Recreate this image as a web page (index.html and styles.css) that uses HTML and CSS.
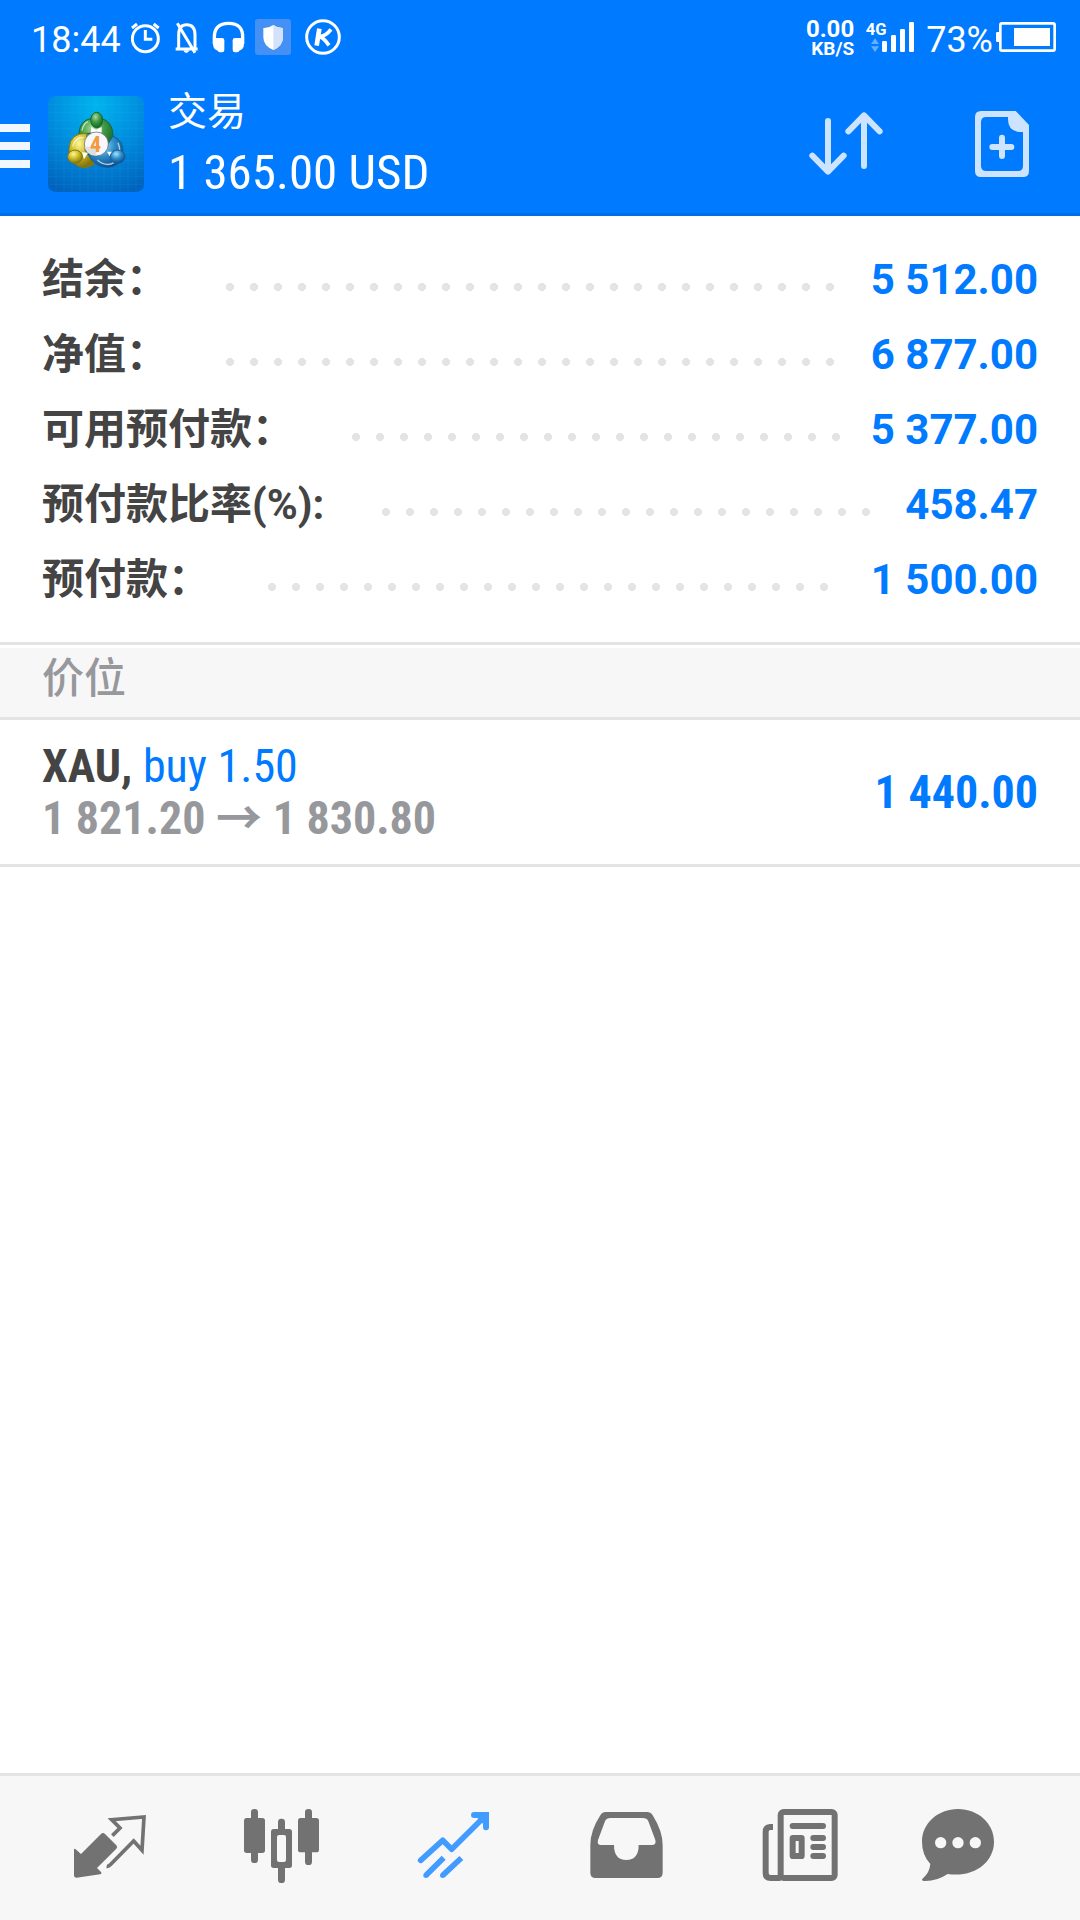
FILE: index.html
```html
<!DOCTYPE html>
<html lang="zh-CN">
<head>
<meta charset="utf-8">
<meta name="viewport" content="width=device-width, initial-scale=1">
<title>交易</title>
<link rel="stylesheet" href="styles.css">
</head>
<body>
<div class="status">
  <div class="status-group">
    <span class="status-text">18:44</span>
    <svg width="34" height="36" viewBox="393 57 102 108" fill="none" stroke="#fff" stroke-width="9"><circle cx="436" cy="116" r="39"/><path d="M436 90v28h21M396 84l15-12M476 84l-15-12"/></svg>
    <svg width="26" height="36" viewBox="525 57 78 108" fill="none" stroke="#fff" stroke-width="9"><path d="M527 147h66M536 146v-42q0-30 24-30q25 0 25 30v42M532 70l53 88"/><path d="M550 151h18q-2 8-9 8t-9-8z" fill="#fff" stroke="none"/></svg>
    <svg width="34" height="36" viewBox="633 57 102 108"><path d="M643 132v-20q0-42 43-42t42 42v20" fill="none" stroke="#fff" stroke-width="10"/><rect x="653" y="114" width="20" height="43" rx="7" fill="#fff"/><rect x="698" y="114" width="20" height="43" rx="7" fill="#fff"/><path d="M639 114h22v40q-22-2-22-22zM732 114h-22v40q22-2 22-22z" fill="#fff"/></svg>
    <svg width="36" height="36" viewBox="762 57 108 108"><rect x="762" y="57" width="108" height="108" rx="9" fill="#4590f4"/><path d="M817 75q14 10 29 9v28q0 26-29 38q-30-12-30-38v-28q15 1 30-9z" fill="#fff"/><path d="M817 75q14 10 29 9v28q0 26-29 38z" fill="#d2e2fa"/></svg>
    <svg width="40" height="36" viewBox="903 57 120 108" fill="none" stroke="#fff"><circle cx="969" cy="111" r="49" stroke-width="9"/><path d="M958 86l-8 51" stroke-width="14"/><path d="M993 88q-15 20-35 22q12 2 29 26" stroke-width="11"/></svg>
  </div>
  <div class="status-group">
    <span class="speed"><span class="speed-value">0.00</span><span class="speed-unit">KB/S</span></span>
    <svg width="52" height="36" viewBox="255 57 156 108" fill="#fff"><text class="network" x="260" y="105">4G</text><path d="M288 115l12 17h-24zM288 156l12-17h-24z" fill="#66afff"/><rect x="309" y="123" width="15" height="33" rx="4"/><rect x="336" y="105" width="15" height="51" rx="4"/><rect x="363" y="87" width="15" height="69" rx="4"/><rect x="390" y="66" width="15" height="90" rx="4"/></svg>
    <span class="battery"><span class="status-text">73%</span>
    <svg width="60" height="36" viewBox="648 57 180 108"><rect x="661" y="70" width="163" height="82" rx="5" fill="none" stroke="#fff" stroke-width="8"/><path d="M648 100q0-4 4-4h6v30h-6q-4 0-4-4zM702 84h108v54H702z" fill="#fff"/></svg></span>
  </div>
</div>

<header class="header">
  <button class="menu" type="button" aria-label="菜单"><svg width="30" height="44" viewBox="0 0 30 44" fill="#f0f7ff"><path d="M0 0h30v8H0zM0 18h30v8H0zM0 36h30v8H0z"/></svg></button>
  <svg class="logo" width="96" height="96" viewBox="24 33 288 288">
    <defs>
      <radialGradient id="sky" cx=".5" cy=".1" r=".95"><stop offset="0" stop-color="#00b4ee"/><stop offset=".55" stop-color="#0089dc"/><stop offset="1" stop-color="#0064bd"/></radialGradient>
      <radialGradient id="green" cx=".4" cy=".3" r=".7"><stop offset="0" stop-color="#a5dc9c"/><stop offset=".5" stop-color="#3f9a43"/><stop offset="1" stop-color="#17682c"/></radialGradient>
      <radialGradient id="yellow" cx=".4" cy=".3" r=".7"><stop offset="0" stop-color="#fff79a"/><stop offset=".5" stop-color="#cdbb28"/><stop offset="1" stop-color="#857409"/></radialGradient>
      <radialGradient id="blue" cx=".4" cy=".3" r=".7"><stop offset="0" stop-color="#a8e2fb"/><stop offset=".5" stop-color="#2e8fcb"/><stop offset="1" stop-color="#0a4f8d"/></radialGradient>
    </defs>
    <rect x="24" y="33" width="288" height="288" rx="22" fill="url(#sky)"/>
    <path d="M48 33v288M72 33v288M96 33v288M120 33v288M144 33v288M168 33v288M192 33v288M216 33v288M240 33v288M264 33v288M288 33v288M24 58h288M24 82h288M24 106h288M24 130h288M24 154h288M24 178h288M24 202h288M24 226h288M24 250h288M24 274h288M24 298h288" stroke="#5bd0ff" stroke-opacity=".13" stroke-width="2"/>
    <g stroke-width="3">
      <path d="M117 146q2-39 35-45h34q31 9 33 49q-1 28-22 49l-15-50q-9-12-30-4z" fill="url(#green)" stroke="#1a672e"/>
      <path d="M141 145q-51-2-54 45q-4 37 28 54q22 9 48-6l-28-42z" fill="url(#yellow)" stroke="#85770e"/>
      <path d="M219 153q33 14 30 52q-10 45-51 42q-39-4-54-41l45-5z" fill="url(#blue)" stroke="#155f99"/>
      <path d="M153 126l15 8 17-8v17h-32zM126 202l18 1-12 20zM201 200h16l-8 14z" fill="#fff" stroke="none"/>
      <path d="M126 137q4-22 18-27M98 184q7-27 32-27M234 173q12 28-3 46M172 225q26 22 50 8" fill="none" stroke="#fff" stroke-opacity=".65" stroke-width="4"/>
      <ellipse cx="170" cy="105" rx="18" ry="23" fill="url(#green)" stroke="#1a672e"/>
      <ellipse cx="105" cy="215" rx="22" ry="20" fill="url(#yellow)" stroke="#85770e"/>
      <ellipse cx="233" cy="215" rx="22" ry="20" fill="url(#blue)" stroke="#155f99"/>
    </g>
    <circle cx="169" cy="177" r="36" fill="#f8f8fa" stroke="#55595b" stroke-width="2"/>
    <path d="M134 185h35v27q-31-2-35-27z" fill="#dedfe3"/>
    <text class="logo-digit" x="150" y="200">4</text>
  </svg>
  <div class="heading">
    <h1 class="title">交易</h1>
    <p class="profit">1 365.00 USD</p>
  </div>
  <div class="actions">
    <button type="button" aria-label="排序"><svg width="78" height="72" viewBox="84 324 234 216" fill="none" stroke="#cce4ff" stroke-width="18" stroke-linecap="round" stroke-linejoin="round"><path d="M144 363v150M97 467l47 48 47-48M252 498V348M205 394l47-48 47 48"/></svg></button>
    <button type="button" aria-label="新订单"><svg width="60" height="72" viewBox="576 324 180 216"><path fill-rule="evenodd" d="M603 333h104l40 42v138q0 18-18 18H603q-18 0-18-18V351q0-18 18-18zM684 351h-65q-16 0-16 16v130q0 16 16 16h95q15 0 15-16V396h-12q-33-3-33-38z" fill="#cce4ff"/><path d="M666 413v55M637 441h57" stroke="#cce4ff" stroke-width="18" stroke-linecap="round"/></svg></button>
  </div>
</header>

<main class="main">
  <dl class="summary">
    <div class="summary-row"><dt>结余：</dt><dd>5 512.00</dd></div>
    <div class="summary-row"><dt>净值：</dt><dd>6 877.00</dd></div>
    <div class="summary-row"><dt>可用预付款：</dt><dd>5 377.00</dd></div>
    <div class="summary-row"><dt>预付款比率(%):</dt><dd>458.47</dd></div>
    <div class="summary-row"><dt>预付款：</dt><dd>1 500.00</dd></div>
  </dl>
  <h2 class="section">价位</h2>
  <article class="position">
    <div>
      <p class="symbol"><strong>XAU,</strong> <span class="side">buy 1.50</span></p>
      <p class="prices">1 821.20 → 1 830.80</p>
    </div>
    <span class="result">1 440.00</span>
  </article>
</main>

<nav class="tabs">
  <button type="button" aria-label="行情"><svg viewBox="66 111 288 288"><path d="M102 268q1-4 5 0l16 14 60-60q6-6 12 0l34 34q5 5 0 10l-58 58 12 12q4 6-3 7l-70 10q-8 0-8-8z" fill="#727272"/><path d="M200 319q6 1 11-5l70-71 25 28 6-100-97 8 25 25-23 23" fill="none" stroke="#727272" stroke-width="11"/></svg></button>
  <button type="button" aria-label="图表"><svg viewBox="582 111 288 288" fill="#727272"><rect x="633" y="147" width="21" height="162" rx="10"/><rect x="612" y="174" width="63" height="105" rx="8"/><rect x="795" y="147" width="21" height="168" rx="10"/><rect x="774" y="174" width="63" height="103" rx="8"/><rect x="714" y="176" width="21" height="193" rx="10"/><rect x="693" y="207" width="63" height="117" rx="8"/><rect x="711" y="225" width="27" height="81" rx="6" fill="#f7f7f7"/></svg></button>
  <button type="button" aria-label="交易" aria-current="page"><svg viewBox="1098 111 288 288" fill="none" stroke="#429cff" stroke-width="17"><path d="M1142 301l66-60 27 27 98-98" stroke-linecap="round" stroke-linejoin="round"/><path d="M1302 165h36v37" stroke-width="18" stroke-linecap="round"/><path d="M1312 174h26v26zM1330 156h17v18h-17z" fill="#429cff" stroke="none"/><path d="M1211 293l-53 53M1264 294l-56 52" /><g fill="#429cff" stroke="none"><circle cx="1158" cy="346" r="8"/><circle cx="1208" cy="346" r="8"/></g></svg></button>
  <button type="button" aria-label="历史"><svg viewBox="54 111 288 288"><path fill-rule="evenodd" d="M137 156h124q11 0 17 10q30 48 30 89v83q0 16-16 16H107q-16 0-16-16v-83q0-43 30-89q6-10 16-10zM152 174q-13 0-17 10l-21 56q-4 15 9 15h39q0 45 37 45t37-45h39q15 0 11-15l-21-56q-4-10-17-10z" fill="#727272"/></svg></button>
  <button type="button" aria-label="新闻"><svg viewBox="570 111 288 288" fill="none" stroke="#727272" stroke-width="18"><rect x="662" y="156" width="162" height="198" rx="9"/><path d="M639 201h-9q-13 1-13 14v124q0 15 15 15h30"/><path d="M698 198h91M760 234h29M760 261h29M760 288h29" stroke-linecap="round"/><rect x="698" y="234" width="27" height="54" rx="1"/></svg></button>
  <button type="button" aria-label="消息"><svg viewBox="1086 111 288 288"><path d="M1194 147c60 0 108 43 108 98c0 61-58 108-139 97q-35 23-72 21q-9-2-2-8q20-18 22-43q-25-27-25-67c0-55 48-98 108-98z" fill="#727272"/><g fill="#f7f7f7"><circle cx="1142" cy="248" r="17"/><circle cx="1194" cy="248" r="17"/><circle cx="1246" cy="248" r="17"/></g></svg></button>
</nav>
</body>
</html>
```
FILE: styles.css
```css
* {
  box-sizing: border-box;
}

body {
  display: flex;
  flex-direction: column;
  min-height: 100vh;
  margin: 0;
  background: #fff;
  color: #444;
  font-family: Roboto, "Noto Sans CJK SC", sans-serif;
}

h1, h2, p, dl, dd {
  margin: 0;
}

button {
  display: flex;
  padding: 0;
  border: 0;
  background: none;
  cursor: pointer;
}

svg {
  display: block;
  flex: none;
}

/* Status bar */
.status {
  display: flex;
  justify-content: space-between;
  height: 72px;
  padding: 19px 24px 0 31px;
  background: #007aff;
  color: #fff;
}

.status-group {
  display: flex;
  gap: 10px;
}

.status-text {
  font-size: 36px;
  line-height: 42px;
}

.speed {
  display: flex;
  flex-direction: column;
  text-align: right;
  font-weight: 700;
  line-height: 20px;
}

.speed-value {
  font-size: 24px;
}

.speed-unit {
  font-size: 19px;
}

.network {
  font-size: 50px;
  font-weight: 700;
}

.battery {
  display: flex;
  gap: 3px;
}

/* Header */
.header {
  display: flex;
  align-items: center;
  height: 144px;
  padding-right: 48px;
  background: #007aff;
  box-shadow: inset 0 -3px #0070e6;
  color: #fff;
}

.menu {
  padding-top: 4px;
}

.logo {
  margin: 0 24px 0 18px;
}

.logo-digit {
  fill: #f39a3c;
  font-family: "Roboto Condensed", Roboto, sans-serif;
  font-size: 66px;
  font-weight: 700;
}

.heading {
  flex: 1;
}

.title {
  font-size: 39px;
  font-weight: 400;
  line-height: 58px;
}

.profit {
  font-family: "Roboto Condensed", Roboto, sans-serif;
  font-size: 49px;
  line-height: 64px;
}

.actions {
  display: flex;
  gap: 86px;
}

/* Account summary */
.main {
  flex: 1;
}

.summary {
  padding: 26px 42px 25px;
  border-bottom: 3px solid #e4e4e4;
}

.summary-row {
  display: flex;
  align-items: center;
  height: 75px;
  font-size: 42px;
  line-height: 60px;
}

.summary-row dt {
  display: contents;
  font-weight: 700;
}

.summary-row dt::after {
  content: "";
  flex: 1;
  height: 8px;
  margin: 14px 30px 0 58px;
  background: radial-gradient(circle at 4px 4px, #e4e4e4 4px, transparent 4px) 0 0 / 24px 8px repeat-x;
}

.summary-row dd {
  color: #007aff;
  font-weight: 700;
}

.section {
  height: 72px;
  margin-top: 3px;
  padding: 0 42px;
  border-bottom: 3px solid #e4e4e4;
  background: #f7f7f7;
  color: #97989c;
  font-size: 42px;
  font-weight: 500;
  line-height: 62px;
}

/* Open position */
.position {
  display: flex;
  align-items: center;
  justify-content: space-between;
  height: 147px;
  padding: 0 42px;
  border-bottom: 3px solid #e4e4e4;
  font-family: "Roboto Condensed", Roboto, "Noto Sans CJK SC", sans-serif;
  font-size: 46px;
  line-height: 52px;
}

.side {
  color: #007aff;
}

.prices {
  color: #97989c;
  font-weight: 700;
}

.result {
  color: #007aff;
  font-weight: 700;
}

/* Bottom tabs */
.tabs {
  display: flex;
  height: 147px;
  padding: 0 24px 6px;
  border-top: 3px solid #e4e4e4;
  background: #f7f7f7;
}

.tabs button {
  flex: 1;
  align-items: center;
  justify-content: center;
}

.tabs svg {
  width: 96px;
  height: 96px;
}
```
